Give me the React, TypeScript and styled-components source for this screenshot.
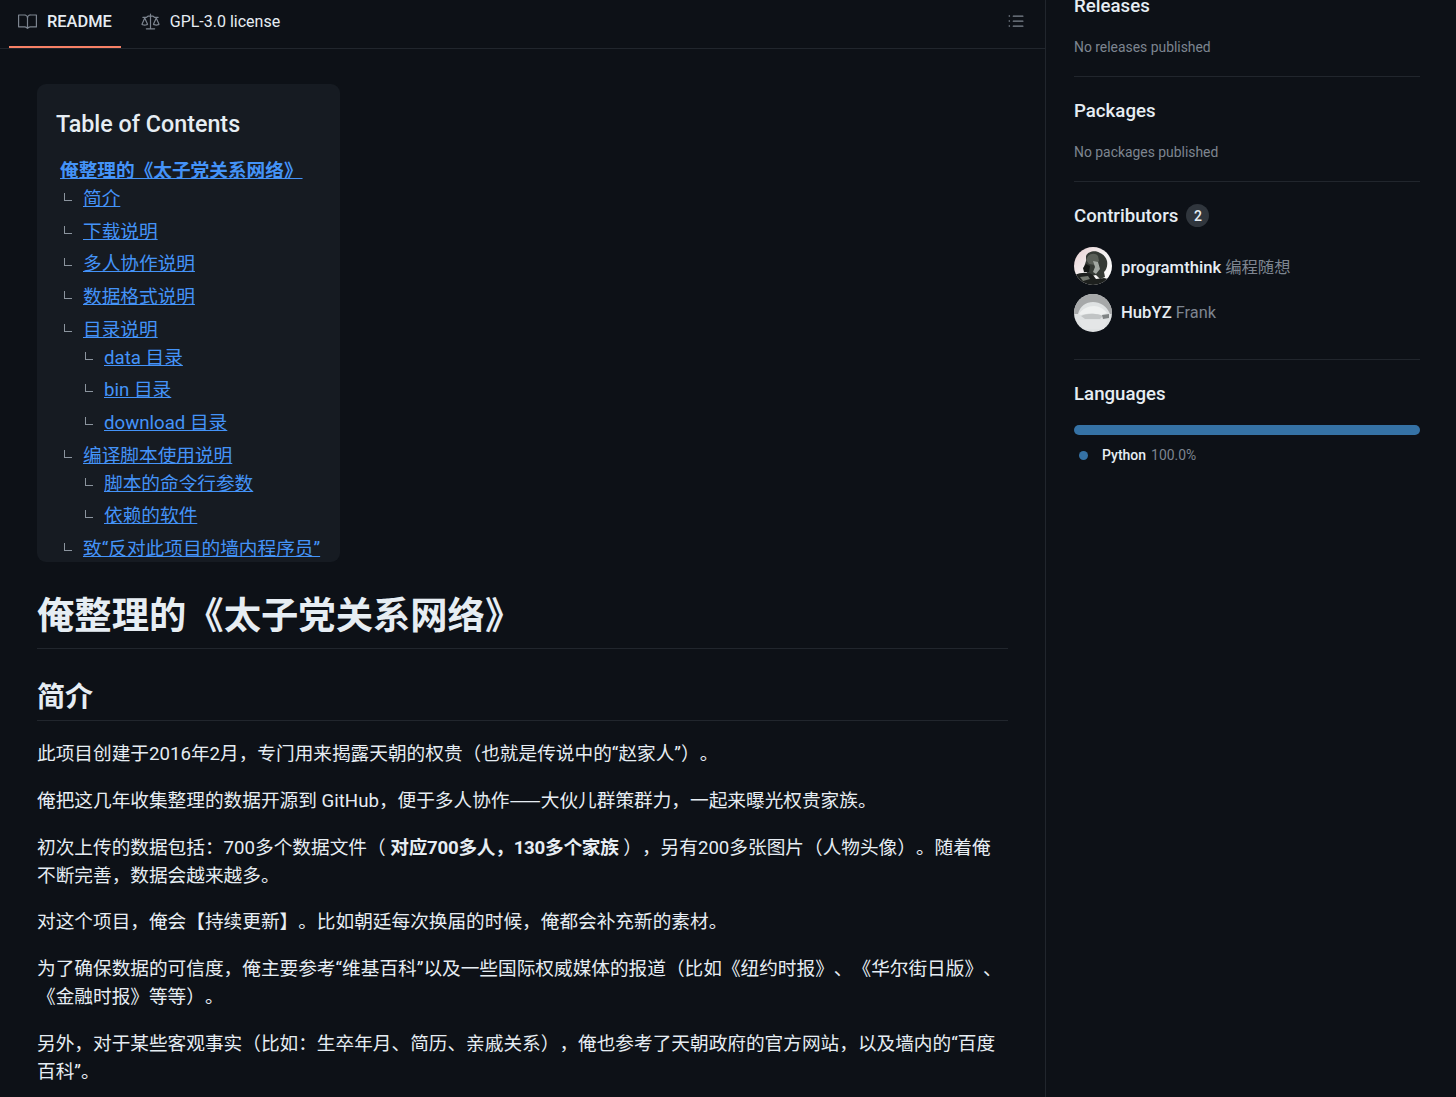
import React from 'react';
import styled, { createGlobalStyle } from 'styled-components';
import { GoBook, GoLaw, GoListUnordered } from 'react-icons/go';

const FONT = `Roboto, "Noto Sans CJK SC", sans-serif`;

const Global = createGlobalStyle`
  html, body { margin: 0; padding: 0; background: #0d1117; }
  body { font-family: ${FONT}; color: #e6edf3; height: 1097px; overflow: hidden; text-spacing-trim: space-all; }
  #root { height: 1097px; overflow: hidden; }
`;

const Page = styled.div`
  display: grid;
  grid-template-columns: 1046px 1fr;
  height: 1097px;
  overflow: hidden;
`;
const Main = styled.main`
  border-right: 1px solid #21262d;
  overflow: hidden;
`;
const Tabs = styled.nav`
  display: flex;
  align-items: center;
  justify-content: space-between;
  height: 48px;
  padding: 0 19px 0 9px;
  border-bottom: 1px solid #21262d;
  box-sizing: content-box;
`;
const TabGroup = styled.div`
  display: flex;
  height: 100%;
`;
const Tab = styled.a<{ $active?: boolean }>`
  display: flex;
  align-items: center;
  gap: 10px;
  height: 100%;
  box-sizing: border-box;
  padding: 0 9px 3px;
  margin-right: 11px;
  font-size: ${p => (p.$active ? 16.4 : 16)}px;
  font-weight: ${p => (p.$active ? 500 : 400)};
  color: #e6edf3;
  border-bottom: 2px solid ${p => (p.$active ? '#f78166' : 'transparent')};
  svg { color: #7d8590; flex: none; }
`;
const Outline = styled.span`
  display: flex;
  padding-bottom: 6px;
  color: #7d8590;
`;
const Article = styled.article`
  padding: 35px 37px 0;
  width: 971px;
  box-sizing: content-box;
`;
const Toc = styled.div`
  width: 303px;
  height: 478px;
  background: #161b22;
  border-radius: 9px;
  padding: 19px 19px 0;
  box-sizing: border-box;
  overflow: hidden;
`;
const TocTitle = styled.div`
  font-size: 23.3px;
  font-weight: 500;
  line-height: 42px;
  margin-bottom: 12px;
  color: #e6edf3;
`;
const TocRoot = styled.a`
  display: inline-block;
  margin-left: 4px;
  font-size: 18.67px;
  line-height: 28px;
  font-weight: 700;
  color: #4493f8;
  text-decoration: underline;
  white-space: pre;
`;
const TocList = styled.ul<{ $nested?: boolean }>`
  list-style: none;
  margin: 0;
  padding: 0 0 0 ${p => (p.$nested ? 21 : 8)}px;
`;
const TocItem = styled.li`
  margin-top: 4.67px;
  &:first-child { margin-top: 0; }
`;
const TocRow = styled.div`
  display: flex;
  align-items: flex-start;
  gap: 11px;
  height: 28px;
`;
const Elbow = styled.i`
  display: block;
  width: 7px;
  height: 7px;
  margin-top: 8px;
  border-left: 1px solid #8b949e;
  border-bottom: 1px solid #8b949e;
`;
const TocLink = styled.a`
  font-size: 18.67px;
  line-height: 28px;
  color: #4493f8;
  text-decoration: underline;
  white-space: nowrap;
`;
const H1 = styled.h1`
  margin: 31px 0 18.67px;
  padding-bottom: 8px;
  font-size: 37.33px;
  line-height: 46.7px;
  font-weight: 700;
  color: #e6edf3;
  border-bottom: 1px solid #21262d;
`;
const H2 = styled.h2`
  margin: 31px 0 19.67px;
  padding-bottom: 5px;
  font-size: 28px;
  line-height: 35px;
  font-weight: 700;
  color: #e6edf3;
  border-bottom: 1px solid #21262d;
`;
const P = styled.p`
  margin: 0 0 18.67px;
  font-size: 18.67px;
  line-height: 28px;
  color: #e6edf3;
  strong { font-weight: 700; letter-spacing: -0.25px; }
`;
const Dash = styled.span`
  font-family: "Noto Sans CJK SC", sans-serif;
  line-height: 0;
`;
const Side = styled.aside`
  padding: 0 36px 0 28px;
  margin-top: -8.5px;
`;
const Section = styled.section<{ $last?: boolean }>`
  padding: 0 0 ${p => (p.$last ? 0 : 18)}px;
  margin-bottom: 20px;
  border-bottom: ${p => (p.$last ? 'none' : '1px solid #21262d')};
`;
const SideTitle = styled.h3`
  display: flex;
  align-items: center;
  gap: 5px;
  margin: 0 0 17px;
  font-size: 18.67px;
  line-height: 28px;
  font-weight: 500;
  color: #e6edf3;
`;
const Count = styled.span`
  display: inline-flex;
  align-items: center;
  justify-content: center;
  width: 23px;
  height: 23px;
  margin-left: 3px;
  border-radius: 50%;
  background: #30363d;
  font-size: 14px;
  font-weight: 500;
`;
const Muted = styled.div`
  font-size: 13.9px;
  line-height: 21px;
  color: #7d8590;
`;
const People = styled.div`
  display: flex;
  flex-direction: column;
  gap: 9px;
  margin: 0 0 9px;
`;
const Person = styled.div`
  display: flex;
  align-items: center;
  gap: 9px;
  height: 38px;
`;
const Avatar = styled.svg`
  width: 38px;
  height: 38px;
  flex: none;
  border-radius: 50%;
`;
const Name = styled.span`
  font-size: 16.7px;
  font-weight: 500;
  color: #e6edf3;
`;
const Alias = styled.span`
  font-size: 16.33px;
  font-weight: 400;
  color: #7d8590;
  margin-left: 4px;
`;
const Bar = styled.div`
  height: 10px;
  border-radius: 5px;
  background: #3572a5;
  margin: 0 0 10px;
`;
const Lang = styled.div`
  display: flex;
  align-items: center;
  padding-left: 5px;
  font-size: 14px;
  line-height: 21px;
`;
const Dot = styled.i`
  width: 9px;
  height: 9px;
  border-radius: 50%;
  background: #3572a5;
  margin-right: 14px;
`;
const LangName = styled.span`
  font-weight: 500;
  color: #e6edf3;
  margin-right: 5px;
`;

type Node = { t: string; c?: string[] };
const toc: Node[] = [
  { t: '简介' },
  { t: '下载说明' },
  { t: '多人协作说明' },
  { t: '数据格式说明' },
  { t: '目录说明', c: ['data 目录', 'bin 目录', 'download 目录'] },
  { t: '编译脚本使用说明', c: ['脚本的命令行参数', '依赖的软件'] },
  { t: '致“反对此项目的墙内程序员”' },
];

const Row = ({ t }: { t: string }) => (
  <TocRow>
    <Elbow />
    <TocLink>{t}</TocLink>
  </TocRow>
);

export default function App() {
  return (
    <Page>
      <Global />
      <Main>
        <Tabs>
          <TabGroup>
            <Tab $active><GoBook size={19} />README</Tab>
            <Tab><GoLaw size={19} />GPL-3.0 license</Tab>
          </TabGroup>
          <Outline><GoListUnordered size={20} /></Outline>
        </Tabs>
        <Article>
          <Toc>
            <TocTitle>Table of Contents</TocTitle>
            <TocRoot>俺整理的《太子党关系网络》</TocRoot>
            <TocList>
              {toc.map(n => (
                <TocItem key={n.t}>
                  <Row t={n.t} />
                  {n.c && (
                    <TocList $nested>
                      {n.c.map(x => (
                        <TocItem key={x}><Row t={x} /></TocItem>
                      ))}
                    </TocList>
                  )}
                </TocItem>
              ))}
            </TocList>
          </Toc>
          <H1>俺整理的《太子党关系网络》</H1>
          <H2>简介</H2>
          <P>此项目创建于2016年2月，专门用来揭露天朝的权贵（也就是传说中的“赵家人”）。</P>
          <P>俺把这几年收集整理的数据开源到 GitHub，便于多人协作<Dash>——</Dash>大伙儿群策群力，一起来曝光权贵家族。</P>
          <P>初次上传的数据包括：700多个数据文件（ <strong>对应700多人，130多个家族</strong> ），另有200多张图片（人物头像）。随着俺不断完善，数据会越来越多。</P>
          <P>对这个项目，俺会【持续更新】。比如朝廷每次换届的时候，俺都会补充新的素材。</P>
          <P>为了确保数据的可信度，俺主要参考“维基百科”以及一些国际权威媒体的报道（比如《纽约时报》、《华尔街日版》、《金融时报》等等）。</P>
          <P>另外，对于某些客观事实（比如：生卒年月、简历、亲戚关系），俺也参考了天朝政府的官方网站，以及墙内的“百度百科”。</P>
        </Article>
      </Main>
      <Side>
        <Section>
          <SideTitle>Releases</SideTitle>
          <Muted>No releases published</Muted>
        </Section>
        <Section>
          <SideTitle>Packages</SideTitle>
          <Muted>No packages published</Muted>
        </Section>
        <Section>
          <SideTitle>Contributors <Count>2</Count></SideTitle>
          <People>
            <Person>
              <Avatar viewBox="0 0 38 38">
                <defs>
                  <linearGradient id="sky" x1="0" y1="0" x2="1" y2="1">
                    <stop offset="0" stopColor="#e8cfd2" />
                    <stop offset="0.5" stopColor="#f4f2f2" />
                    <stop offset="1" stopColor="#ffffff" />
                  </linearGradient>
                </defs>
                <rect width="38" height="38" fill="url(#sky)" />
                <path d="M12 9c2-5 10-6 14-3 3 1 6 4 7 8 1 5-1 9-3 11l1 5-5 2-4-4-5 1-4-3-3-6 2-6z" fill="#353a35" />
                <path d="M14 9c3-3 8-3 10 0l1 5-4 4-6-1-3-4z" fill="#5a5f58" />
                <path d="M19 14l5 1 2 7-4 5-3-2 2-5z" fill="#a2a8a2" />
                <path d="M12 17l4 2-1 6-5 0-1-4z" fill="#141715" />
                <path d="M1 28c6-3 14-3 18 0l3 4 8-1 4 1-3 6H4z" fill="#1d201e" />
                <path d="M6 30l8-1 2 3-7 2z" fill="#73786f" />
              </Avatar>
              <span><Name>programthink</Name><Alias>编程随想</Alias></span>
            </Person>
            <Person>
              <Avatar viewBox="0 0 38 38">
                <rect width="38" height="38" fill="#dfe2e3" />
                <path d="M0 0h38v20h-2C33 12 26 8 19 8S6 12 4 20H0z" fill="#a6a8a9" />
                <path d="M5 20c3-5 9-8 15-8 5 0 10 3 13 7l-6 2c-6-2-14-2-20 0z" fill="#eef0f0" />
                <path d="M7 22c6-3 16-3 22 0l-3 3H11z" fill="#c1c4c5" />
                <path d="M28 21l7-1v4l-6 1z" fill="#7f8384" />
                <path d="M5 26h28l-3 9H9z" fill="#e4e6e7" />
              </Avatar>
              <span><Name>HubYZ</Name><Alias>Frank</Alias></span>
            </Person>
          </People>
        </Section>
        <Section $last>
          <SideTitle>Languages</SideTitle>
          <Bar />
          <Lang><Dot /><LangName>Python</LangName><Muted as="span">100.0%</Muted></Lang>
        </Section>
      </Side>
    </Page>
  );
}
